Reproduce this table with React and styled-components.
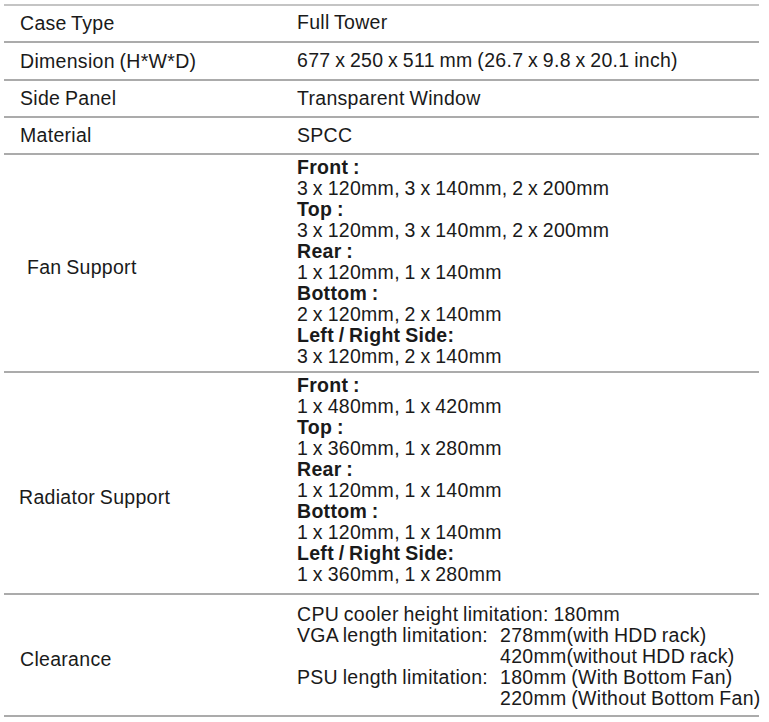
import React from "react";
import styled, { createGlobalStyle } from "styled-components";

const Global = createGlobalStyle`
  html, body { margin: 0; padding: 0; background: #ffffff; }
  body {
    font-family: "Liberation Sans", Arial, Helvetica, sans-serif;
    color: #1a1a1a;
  }
`;

const Table = styled.div`
  margin: 4px 0 0 4px;
  width: 755px;
  border-top: 2px solid #c4c4c4;
  font-size: 19.5px;
  line-height: 21px;
  letter-spacing: 0.3px;
  word-spacing: -1px;
`;

const Row = styled.div`
  display: grid;
  grid-template-columns: 293px 1fr;
  border-bottom: 2px solid #ababab;
`;

const Label = styled.div`
  align-self: center;
  padding-left: ${(p) => p.$indent ?? 16}px;
  padding-top: ${(p) => p.$shift ?? 0}px;
  white-space: nowrap;
`;

const Value = styled.div`
  padding-top: ${(p) => p.$pt ?? 7}px;
  padding-bottom: ${(p) => p.$pb ?? 7}px;
  white-space: nowrap;
`;

const Heading = styled.div`
  font-weight: 700;
`;

const Line = styled.div``;

const LimitGrid = styled.div`
  display: grid;
  grid-template-columns: auto auto;
  justify-content: start;
  column-gap: 12px;
`;

const simple = [
  ["Case Type", "Full Tower", 6, 8],
  ["Dimension (H*W*D)", "677 x 250 x 511 mm (26.7 x 9.8 x 20.1 inch)", 7, 8],
  ["Side Panel", "Transparent Window", 7, 7],
  ["Material", "SPCC", 7, 7],
];

const fan = [
  ["Front :", "3 x 120mm, 3 x 140mm, 2 x 200mm"],
  ["Top :", "3 x 120mm, 3 x 140mm, 2 x 200mm"],
  ["Rear :", "1 x 120mm, 1 x 140mm"],
  ["Bottom :", "2 x 120mm, 2 x 140mm"],
  ["Left / Right Side:", "3 x 120mm, 2 x 140mm"],
];

const radiator = [
  ["Front :", "1 x 480mm, 1 x 420mm"],
  ["Top :", "1 x 360mm, 1 x 280mm"],
  ["Rear :", "1 x 120mm, 1 x 140mm"],
  ["Bottom :", "1 x 120mm, 1 x 140mm"],
  ["Left / Right Side:", "1 x 360mm, 1 x 280mm"],
];

const Groups = ({ items }) =>
  items.map(([h, v]) => (
    <React.Fragment key={h}>
      <Heading>{h}</Heading>
      <Line>{v}</Line>
    </React.Fragment>
  ));

export default function App() {
  return (
    <>
      <Global />
      <Table>
        {simple.map(([l, v, pt, pb]) => (
          <Row key={l}>
            <Label>{l}</Label>
            <Value $pt={pt} $pb={pb}>{v}</Value>
          </Row>
        ))}
        <Row>
          <Label $indent={23} $shift={8}>Fan Support</Label>
          <Value $pt={2} $pb={4}>
            <Groups items={fan} />
          </Value>
        </Row>
        <Row>
          <Label $indent={15} $shift={28}>Radiator Support</Label>
          <Value $pt={2} $pb={8}>
            <Groups items={radiator} />
          </Value>
        </Row>
        <Row>
          <Label $shift={8}>Clearance</Label>
          <Value $pt={9} $pb={6}>
            <Line>CPU cooler height limitation: 180mm</Line>
            <LimitGrid>
              <span>VGA length limitation:</span>
              <span>278mm(with HDD rack)</span>
              <span />
              <span>420mm(without HDD rack)</span>
              <span>PSU length limitation:</span>
              <span>180mm (With Bottom Fan)</span>
              <span />
              <span>220mm (Without Bottom Fan)</span>
            </LimitGrid>
          </Value>
        </Row>
      </Table>
    </>
  );
}
